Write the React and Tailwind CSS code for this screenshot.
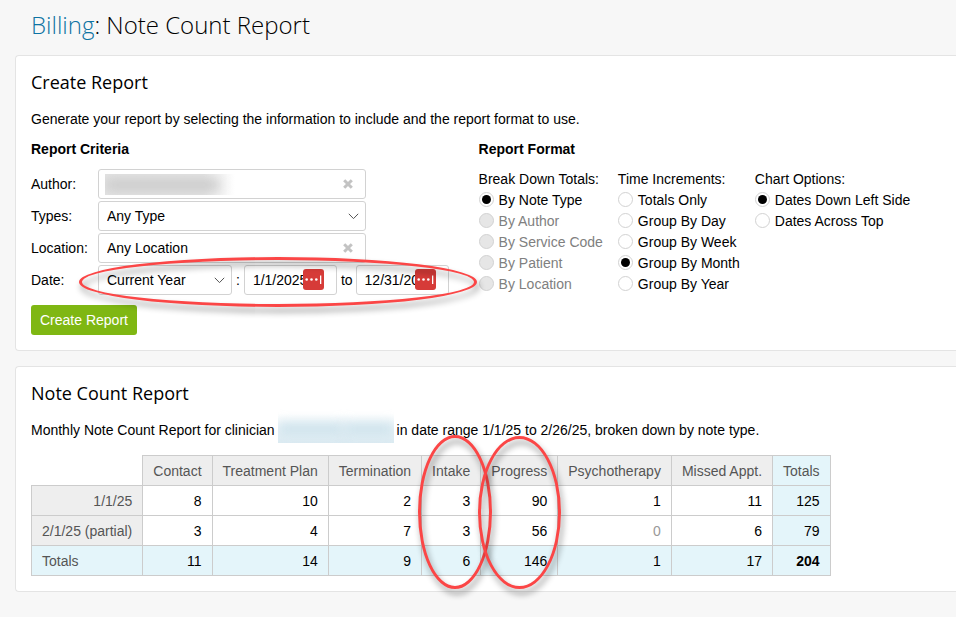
import { useState } from "react";

const COLUMNS = [
  "Contact",
  "Treatment Plan",
  "Termination",
  "Intake",
  "Progress",
  "Psychotherapy",
  "Missed Appt.",
];

const ROWS = [
  { label: "1/1/25", counts: [8, 10, 2, 3, 90, 1, 11], total: 125 },
  { label: "2/1/25 (partial)", counts: [3, 4, 7, 3, 56, 0, 6], total: 79 },
];

const TOTALS = [11, 14, 9, 6, 146, 1, 17];

const BREAKDOWNS = [
  { label: "By Note Type" },
  { label: "By Author", disabled: true },
  { label: "By Service Code", disabled: true },
  { label: "By Patient", disabled: true },
  { label: "By Location", disabled: true },
];

const INCREMENTS = [
  { label: "Totals Only" },
  { label: "Group By Day" },
  { label: "Group By Week" },
  { label: "Group By Month" },
  { label: "Group By Year" },
];

const CHART_OPTIONS = [
  { label: "Dates Down Left Side" },
  { label: "Dates Across Top" },
];

const fieldClass =
  "block h-[30px] w-full appearance-none rounded-[3px] border border-[#d2d2d2] bg-white px-2 text-black";

const Card = ({ title, children }) => (
  <section className="rounded-l-[4px] border border-r-0 border-[#e4e4e4] bg-white p-[15px]">
    <h2 className="mb-4 font-['Open_Sans',sans-serif] text-[18px] leading-[22px]">
      {title}
    </h2>
    {children}
  </section>
);

const Row = ({ id, label, children }) => (
  <div className="relative flex items-center">
    <label htmlFor={id} className="w-[67px] shrink-0">
      {label}
    </label>
    {children}
  </div>
);

const SelectField = ({ id, options, className }) => (
  <div className={`relative ${className}`}>
    <select id={id} className={fieldClass}>
      {options.map((option) => (
        <option key={option}>{option}</option>
      ))}
    </select>
    <svg
      className="pointer-events-none absolute top-[12px] right-[7px] h-[7px] w-[11px]"
      viewBox="0 0 11 7"
      fill="none"
      stroke="#555"
      strokeWidth="1"
    >
      <path d="M0.8 0.8 5.5 5.6 10.2 0.8" />
    </svg>
  </div>
);

const ClearableField = ({ id, value, onChange, children }) => (
  <div className="relative w-[268px]">
    <input
      id={id}
      type="text"
      value={value}
      onChange={(e) => onChange(e.target.value)}
      className={fieldClass}
    />
    {children}
    <button
      type="button"
      aria-label="Clear"
      onClick={() => onChange("")}
      className="absolute top-[10px] right-[13px]"
    >
      <svg
        className="size-[10px]"
        viewBox="0 0 10 10"
        stroke="#c3c3c3"
        strokeWidth="3"
      >
        <path d="M1.2 1.2 8.8 8.8M8.8 1.2 1.2 8.8" />
      </svg>
    </button>
  </div>
);

const DateField = ({ label, defaultValue }) => (
  <div className="relative w-[93px]">
    <input
      type="text"
      aria-label={label}
      defaultValue={defaultValue}
      className={fieldClass}
    />
    <svg
      className="absolute top-1 right-[13px] size-[21px]"
      viewBox="0 0 21 21"
      fill="#fff"
    >
      <rect width="21" height="21" rx="3" fill="#d63b38" />
      <circle cx="3.7" cy="10.5" r="1.3" />
      <circle cx="8.5" cy="10.5" r="1.3" />
      <circle cx="13.3" cy="10.5" r="1.3" />
      <rect x="17" y="6.5" width="1.3" height="8.5" />
    </svg>
  </div>
);

const RadioGroup = ({ title, name, options, value, onChange }) => (
  <fieldset>
    <legend className="leading-5">{title}</legend>
    {options.map(({ label, disabled }) => (
      <label
        key={label}
        className={`flex h-[21px] items-center gap-[5px] ${
          disabled ? "text-[#808080]" : ""
        }`}
      >
        <input
          type="radio"
          name={name}
          checked={value === label}
          disabled={disabled}
          onChange={() => onChange(label)}
          className="flex size-[15px] appearance-none items-center justify-center rounded-full border border-[#d2d2d2] bg-white before:size-[9px] before:rounded-full checked:before:bg-black disabled:bg-[#e6e6e6]"
        />
        {label}
      </label>
    ))}
  </fieldset>
);

// hand-drawn style callout, sits above whatever it circles
const Callout = ({ className }) => (
  <div
    aria-hidden="true"
    className={`pointer-events-none absolute rounded-[50%] border-3 border-[#fb4646] drop-shadow-[2px_5px_3px_rgba(0,0,0,0.45)] ${className}`}
  />
);

const CreateReport = () => {
  const [author, setAuthor] = useState("");
  const [location, setLocation] = useState("Any Location");
  const [breakdown, setBreakdown] = useState("By Note Type");
  const [increment, setIncrement] = useState("Group By Month");
  const [chart, setChart] = useState("Dates Down Left Side");

  return (
    <Card title="Create Report">
      <p>
        Generate your report by selecting the information to include and the
        report format to use.
      </p>
      <form
        className="mt-[10px] flex gap-[29px]"
        onSubmit={(e) => e.preventDefault()}
      >
        <div className="shrink-0">
          <h3 className="font-bold">Report Criteria</h3>
          <div className="mt-[10px] flex flex-col gap-[2px]">
            <Row id="author" label="Author:">
              <ClearableField id="author" value={author} onChange={setAuthor}>
                <span className="pointer-events-none absolute top-[5px] left-[7px] flex h-[21px] w-[130px] items-center overflow-hidden bg-linear-to-r from-[#e4e4e4] from-75% to-white">
                  <span className="h-3 w-[114px] bg-[#cacaca] blur-[6px]" />
                </span>
              </ClearableField>
            </Row>
            <Row id="types" label="Types:">
              <SelectField
                id="types"
                options={["Any Type", ...COLUMNS]}
                className="w-[268px]"
              />
            </Row>
            <Row id="location" label="Location:">
              <ClearableField
                id="location"
                value={location}
                onChange={setLocation}
              />
            </Row>
            <Row id="range" label="Date:">
              <SelectField
                id="range"
                options={["Current Year", "Last Year", "Custom"]}
                className="w-[134px]"
              />
              <span className="px-1">:</span>
              <DateField label="Start date" defaultValue="1/1/2025" />
              <span className="pr-[3px] pl-1">to</span>
              <DateField label="End date" defaultValue="12/31/2025" />
              <Callout className="-top-2 left-[48px] h-[50px] w-[398px]" />
            </Row>
          </div>
          <button
            type="submit"
            className="mt-[10px] block h-[30px] rounded-[3px] bg-[#7fb713] px-[9px] text-white"
          >
            Create Report
          </button>
        </div>

        <div className="pl-px">
          <h3 className="font-bold">Report Format</h3>
          <div className="mt-[10px] flex items-start gap-[15px] whitespace-nowrap">
            <RadioGroup
              title="Break Down Totals:"
              name="breakdown"
              options={BREAKDOWNS}
              value={breakdown}
              onChange={setBreakdown}
            />
            <RadioGroup
              title="Time Increments:"
              name="increment"
              options={INCREMENTS}
              value={increment}
              onChange={setIncrement}
            />
            <RadioGroup
              title="Chart Options:"
              name="chart"
              options={CHART_OPTIONS}
              value={chart}
              onChange={setChart}
            />
          </div>
        </div>
      </form>
    </Card>
  );
};

const headClass =
  "h-[30px] border border-[#ccc] bg-[#eee] px-[10px] font-normal text-[#555]";
const cellClass = "h-[30px] border border-[#ccc] px-[10px]";

const NoteCountReport = () => (
  <Card title="Note Count Report">
    <p className="flex">
      Monthly Note Count Report for clinician
      <span className="mx-[3px] -mt-[14px] -mb-[3px] flex w-[116px] items-center overflow-hidden bg-linear-to-b from-white from-20% to-[#dcebf2]">
        <span className="mt-2 h-3 w-[66px] bg-[#cbe1eb] blur-[6px]" />
        <span className="mt-2 h-3 w-[50px] bg-[#cbe1eb] blur-[6px]" />
      </span>
      in date range 1/1/25 to 2/26/25, broken down by note type.
    </p>
    <div className="relative mt-[15px] w-fit">
      <table className="border-collapse text-right whitespace-nowrap">
        <thead>
          <tr>
            <td />
            {COLUMNS.map((name) => (
              <th key={name} scope="col" className={headClass}>
                {name}
              </th>
            ))}
            <th scope="col" className={`${cellClass} bg-[#e4f5fa] font-normal text-[#555]`}>
              Totals
            </th>
          </tr>
        </thead>
        <tbody>
          {ROWS.map((row) => (
            <tr key={row.label}>
              <th scope="row" className={headClass}>
                {row.label}
              </th>
              {row.counts.map((count, i) => (
                <td
                  key={COLUMNS[i]}
                  className={`${cellClass} ${count === 0 ? "text-[#999]" : ""}`}
                >
                  {count}
                </td>
              ))}
              <td className={`${cellClass} bg-[#e4f5fa]`}>{row.total}</td>
            </tr>
          ))}
        </tbody>
        <tfoot>
          <tr className="bg-[#e4f5fa]">
            <th scope="row" className={`${cellClass} text-left font-normal text-[#555]`}>
              Totals
            </th>
            {TOTALS.map((count, i) => (
              <td key={COLUMNS[i]} className={cellClass}>
                {count}
              </td>
            ))}
            <td className={`${cellClass} font-bold`}>204</td>
          </tr>
        </tfoot>
      </table>
      <Callout className="-top-5 left-[387px] h-[154px] w-[74px]" />
      <Callout className="-top-[19px] left-[447px] h-[153px] w-[83px]" />
    </div>
  </Card>
);

const App = () => {
  return (
    <div className="min-h-screen overflow-hidden bg-[#f7f7f7] pb-6 pl-[15px] font-['Liberation_Sans',Arial,sans-serif] text-[14px] leading-5 text-black">
      <h1 className="px-4 pt-[9px] pb-[14px] font-['Open_Sans',sans-serif] text-[24px] leading-8 font-light">
        <a href="#billing" className="text-[#0d73a3]">
          Billing
        </a>
        : Note Count Report
      </h1>
      <main className="flex flex-col gap-[15px]">
        <CreateReport />
        <NoteCountReport />
      </main>
    </div>
  );
};

export default App;
